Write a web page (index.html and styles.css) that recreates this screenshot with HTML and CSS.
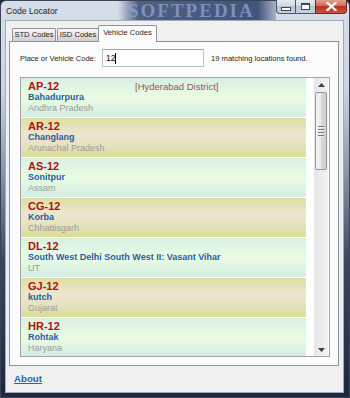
FILE: index.html
```html
<!DOCTYPE html>
<html lang="en">
<head>
    <meta charset="UTF-8">
    <title>Code Locator</title>
    <link rel="stylesheet" href="styles.css">
</head>
<body>

    <div class="window">
        <div class="titlebar">
            <span class="title">Code Locator</span>
            <div class="watermark">SOFTPEDIA</div>
            <div class="caption-buttons">
                <div class="cap-btn min-btn"><span class="min-glyph"></span></div>
                <div class="cap-btn max-btn"><span class="max-glyph"></span></div>
                <div class="cap-btn close-btn">
                    <svg width="11" height="9" viewBox="0 0 11 9">
                        <path d="M1.5 1 L9.5 8 M9.5 1 L1.5 8" stroke="#ffffff" stroke-width="2.2" stroke-linecap="square"/>
                    </svg>
                </div>
            </div>
        </div>

        <div class="client">
            <div class="tabs">
                <div class="tab tab-std">STD Codes</div>
                <div class="tab tab-isd">ISD Codes</div>
                <div class="tab tab-vehicle active">Vehicle Codes</div>
            </div>

            <div class="panel">
                <div class="search-row">
                    <label class="search-label">Place or Vehicle Code:</label>
                    <div class="search-input">12<span class="caret"></span></div>
                    <span class="result-count">19 matching locations found.</span>
                </div>

                <div class="listbox">
                    <div class="items">
                        <div class="item green">
                            <div class="code-row"><span class="code">AP-12</span><span class="district">[Hyderabad District]</span></div>
                            <div class="place">Bahadurpura</div>
                            <div class="state">Andhra Pradesh</div>
                        </div>
                        <div class="item tan">
                            <div class="code-row"><span class="code">AR-12</span></div>
                            <div class="place">Changlang</div>
                            <div class="state">Arunachal Pradesh</div>
                        </div>
                        <div class="item green">
                            <div class="code-row"><span class="code">AS-12</span></div>
                            <div class="place">Sonitpur</div>
                            <div class="state">Assam</div>
                        </div>
                        <div class="item tan">
                            <div class="code-row"><span class="code">CG-12</span></div>
                            <div class="place">Korba</div>
                            <div class="state">Chhattisgarh</div>
                        </div>
                        <div class="item green">
                            <div class="code-row"><span class="code">DL-12</span></div>
                            <div class="place">South West Delhi South West II: Vasant Vihar</div>
                            <div class="state">UT</div>
                        </div>
                        <div class="item tan">
                            <div class="code-row"><span class="code">GJ-12</span></div>
                            <div class="place">kutch</div>
                            <div class="state">Gujarat</div>
                        </div>
                        <div class="item green">
                            <div class="code-row"><span class="code">HR-12</span></div>
                            <div class="place">Rohtak</div>
                            <div class="state">Haryana</div>
                        </div>
                    </div>

                    <div class="scrollbar">
                        <div class="arrow">
                            <svg width="7" height="4" viewBox="0 0 7 4"><path d="M0 4 L3.5 0 L7 4 Z" fill="#404040"/></svg>
                        </div>
                        <div class="thumb">
                            <div class="grip"><span></span><span></span><span></span><span></span></div>
                        </div>
                        <div class="track"></div>
                        <div class="arrow">
                            <svg width="7" height="4" viewBox="0 0 7 4"><path d="M0 0 L7 0 L3.5 4 Z" fill="#404040"/></svg>
                        </div>
                    </div>
                </div>
            </div>

            <a class="about-link" href="#">About</a>
        </div>
    </div>

</body>
</html>
```

FILE: styles.css
```css
body {
    margin: 0;
    width: 350px;
    height: 398px;
    overflow: hidden;
    font-family: "Liberation Sans", Arial, sans-serif;
    background: #1b2438;
}
.window {
    width: 350px;
    height: 398px;
    box-sizing: border-box;
    display: flex;
    flex-direction: column;
    border: 1px solid #3a4454;
    border-radius: 6px 6px 0 0;
    background: linear-gradient(to bottom, #d6dee9 0, #cbd5e1 90px, #8a96a8 170px, #3a4660 260px, #1e2740 100%);
}
.titlebar {
    height: 20px;
    display: flex;
    align-items: flex-start;
}
.title {
    padding-left: 5px;
    line-height: 20px;
    font-size: 8.6px;
    color: #1e1e1e;
    width: 112px;
    flex: none;
}
.watermark {
    width: 158px;
    height: 20px;
    flex: none;
    box-sizing: border-box;
    padding-left: 10px;
    font-family: "Liberation Serif", serif;
    font-weight: bold;
    font-size: 19px;
    line-height: 20px;
    letter-spacing: 2px;
    white-space: nowrap;
    color: rgba(150, 170, 205, 0.7);
    background: linear-gradient(to right, rgba(60, 80, 120, 0) 0, rgba(45, 65, 110, 0.8) 20px, rgba(40, 60, 105, 0.85) 140px, rgba(60, 80, 120, 0.3) 100%);
}
.caption-buttons {
    display: flex;
    margin-top: -1px;
}
.cap-btn {
    height: 14px;
    box-sizing: border-box;
    border: 1px solid #4a5566;
    border-top: none;
    display: flex;
    align-items: center;
    justify-content: center;
    background: linear-gradient(to bottom, #e6ebf1 0, #cfd8e3 45%, #b6c2d0 50%, #c8d3df 100%);
}
.min-btn {
    width: 19px;
    border-radius: 0 0 0 4px;
    border-right: none;
}
.max-btn {
    width: 20px;
    border-right: none;
}
.close-btn {
    width: 32px;
    border-radius: 0 0 4px 0;
    border-color: #6a2a24;
    background: linear-gradient(to bottom, #e0a090 0, #cf6a58 45%, #b8321f 50%, #c8553f 100%);
}
.min-glyph {
    width: 8px;
    height: 2px;
    margin-top: 5px;
    background: #ffffff;
    border: 1px solid #3c4656;
}
.max-glyph {
    width: 7px;
    height: 4px;
    border: 1px solid #3c4656;
    border-top-width: 2px;
    background: #ffffff;
    box-shadow: inset 0 0 0 1px #ffffff;
}
.client {
    flex: 1;
    margin: 0 6px 5px 5px;
    background: #f0f0f0;
    box-shadow: 0 0 0 1px #9fabb9;
    display: flex;
    flex-direction: column;
}
.tabs {
    display: flex;
    align-items: flex-end;
    padding: 4px 0 0 6px;
    height: 16px;
}
.tab {
    height: 13px;
    box-sizing: border-box;
    margin-right: 1px;
    border: 1px solid #8d939c;
    border-bottom: none;
    border-radius: 2px 2px 0 0;
    font-size: 7.6px;
    line-height: 12px;
    text-align: center;
    white-space: nowrap;
    color: #1e1e1e;
    background: linear-gradient(to bottom, #f3f3f3 0, #ebebeb 50%, #dddddd 50%, #d2d2d2 100%);
}
.tab-std {
    width: 44px;
}
.tab-isd {
    width: 42px;
}
.tab.active {
    width: 59px;
    height: 17px;
    margin-left: -2px;
    margin-bottom: -1px;
    line-height: 14px;
    background: #fcfcfc;
    position: relative;
}
.panel {
    margin-left: 3px;
    width: 330px;
    height: 325px;
    box-sizing: border-box;
    border: 1px solid #8d939c;
    background: #fcfcfc;
    padding: 7px 0 0 10px;
}
.search-row {
    display: flex;
    align-items: center;
    height: 18px;
}
.search-label {
    width: 82px;
    font-size: 7.5px;
    color: #1e1e1e;
}
.search-input {
    width: 102px;
    height: 18px;
    box-sizing: border-box;
    border: 1px solid #b8c4d2;
    border-top-color: #9aa6b4;
    background: #ffffff;
    font-size: 8.5px;
    line-height: 16px;
    padding-left: 3px;
    color: #000000;
    display: flex;
    align-items: center;
}
.caret {
    width: 1px;
    height: 11px;
    background: #000000;
}
.result-count {
    margin-left: 7px;
    font-size: 7.6px;
    color: #1e1e1e;
}
.listbox {
    margin-top: 10px;
    width: 310px;
    height: 280px;
    box-sizing: border-box;
    border: 1px solid #a0a4aa;
    background: #ffffff;
    display: flex;
    overflow: hidden;
}
.items {
    width: 285px;
    margin-right: 8px;
    flex: none;
}
.item {
    height: 39px;
    margin-bottom: 1px;
    box-sizing: border-box;
    padding: 2px 0 0 7px;
}
.item.green {
    background: linear-gradient(to bottom, #d8eee2 0, #e9fde3 50%, #d4ece2 100%);
}
.item.tan {
    background: linear-gradient(to bottom, #dcdfa0 0, #ebe6cf 40%, #e6e2c0 70%, #d9dc98 100%);
}
.code-row {
    display: flex;
    height: 12px;
    align-items: center;
}
.code {
    width: 107px;
    font-size: 11px;
    font-weight: bold;
    color: #b40f12;
}
.district {
    font-size: 9.5px;
    color: #8e5a62;
}
.place {
    font-size: 9px;
    line-height: 11px;
    font-weight: bold;
    color: #2a5aa8;
    white-space: nowrap;
}
.state {
    font-size: 9px;
    line-height: 11px;
    color: #9a9a9a;
}
.scrollbar {
    width: 14px;
    flex: none;
    display: flex;
    flex-direction: column;
    background: linear-gradient(to right, #e6e6e6 0, #f2f2f2 100%);
}
.arrow {
    height: 13px;
    display: flex;
    align-items: center;
    justify-content: center;
}
.thumb {
    height: 78px;
    box-sizing: border-box;
    border: 1px solid #979797;
    border-radius: 2px;
    margin: 1px 1px 0 1px;
    background: linear-gradient(to right, #f2f2f2 0, #ebebeb 50%, #d9d9d9 50%, #cfcfcf 100%);
    display: flex;
    align-items: center;
    justify-content: center;
}
.grip {
    display: flex;
    flex-direction: column;
    gap: 1px;
}
.grip span {
    width: 6px;
    height: 1px;
    background: #7a7a7a;
    border-bottom: 1px solid #f4f4f4;
}
.track {
    flex: 1;
}
.about-link {
    margin: 6px 0 0 8px;
    font-size: 9.7px;
    font-weight: bold;
    color: #1f63b8;
    text-decoration: underline;
    line-height: 13px;
}
```
